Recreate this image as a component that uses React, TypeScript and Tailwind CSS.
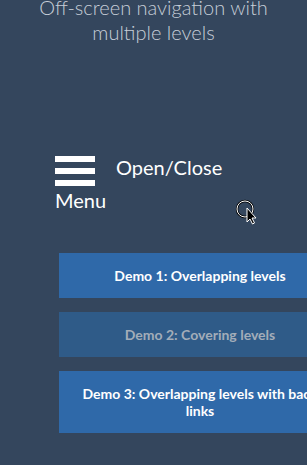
import React from "react";

const DEMOS = [
  { label: "Demo 1: Overlapping levels", dim: false },
  { label: "Demo 2: Covering levels", dim: true },
  { label: "Demo 3: Overlapping levels with back links", dim: false },
];

export default function App() {
  return (
    <div
      className="relative min-h-screen overflow-hidden bg-[#34465d]"
      style={{ fontFamily: "Lato, 'Open Sans', sans-serif" }}
    >
      {/* Page title, partly scrolled off the top */}
      <h1 className="-mt-[5px] text-center text-[20px] font-light leading-[25px] text-[#c7ced8]">
        Off-screen navigation with
        <br />
        multiple levels
      </h1>

      {/* Menu trigger */}
      <div className="mt-[111px] flex items-start pl-[55px] text-[20px] leading-[24px] text-white">
        <div className="flex w-[40px] flex-col whitespace-nowrap">
          <div className="flex w-[40px] flex-col gap-[6px]">
            <span className="h-[6px] bg-white" />
            <span className="h-[6px] bg-white" />
            <span className="h-[6px] bg-white" />
          </div>
          <span className="mt-[2px]">Menu</span>
        </div>
        <span className="ml-[21px] -mt-[1px]">Open/Close</span>
      </div>

      {/* Demo links */}
      <div className="ml-[59px] mt-[41px] flex w-[282px] flex-col gap-[14px]">
        {DEMOS.map((d) => (
          <a
            key={d.label}
            className={
              "block px-[16px] py-[14px] text-center text-[14px] font-bold leading-[17px] " +
              (d.dim ? "bg-[#2f5b88] text-[#a3adb9]" : "bg-[#2f69a9] text-white")
            }
          >
            {d.label}
          </a>
        ))}
      </div>

      {/* Mouse cursor captured in the screenshot */}
      <svg
        className="pointer-events-none absolute left-[234px] top-[198px]"
        width="28"
        height="30"
        viewBox="0 0 28 30"
      >
        <circle cx="11" cy="11" r="8" fill="none" stroke="#000" strokeWidth="2.4" />
        <circle cx="11" cy="11" r="8" fill="none" stroke="#fff" strokeWidth="1" />
        <path
          d="M13 10 L13 24 L16 21 L18.5 26 L20.5 25 L18 20 L22 20 Z"
          fill="#000"
          stroke="#fff"
          strokeWidth="1"
          strokeLinejoin="round"
        />
      </svg>
    </div>
  );
}
